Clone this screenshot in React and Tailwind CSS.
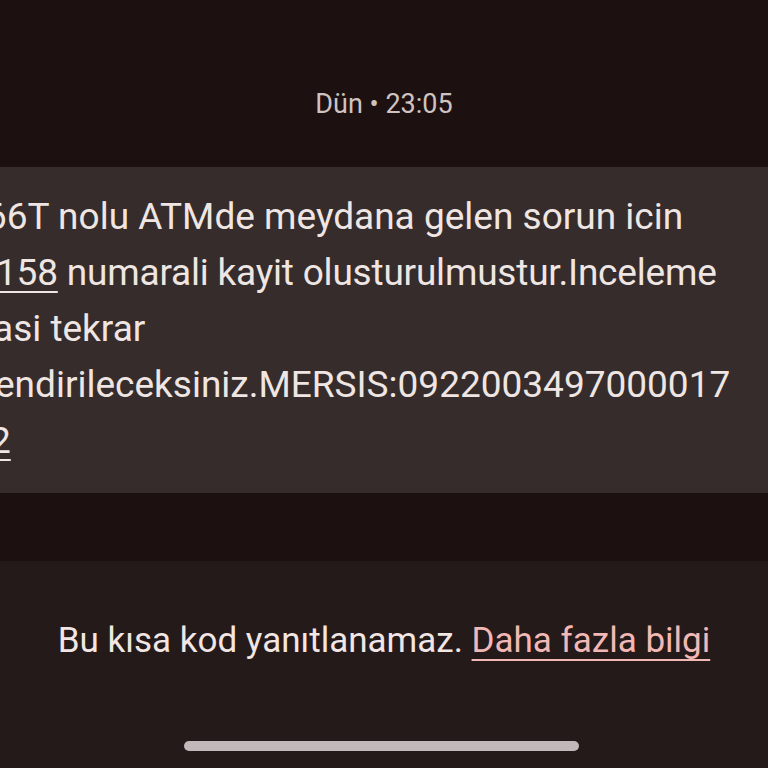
export default function App() {
  const font = "font-['Roboto','Noto_Sans',sans-serif]";
  return (
    <div className={`w-[768px] h-[768px] bg-[#1d1011] flex flex-col overflow-hidden ${font}`}>
      <div className="h-[167px] shrink-0 flex justify-center pt-[89px]">
        <div className="text-[27px] leading-[31px] text-[#cfc3c1]">Dün • 23:05</div>
      </div>
      <div className="h-[326px] shrink-0 bg-[#352c2b] pt-[22px] overflow-hidden text-[37px] leading-[56px] text-[#efe6e4] whitespace-nowrap">
        <div className="-ml-[14px]">66T nolu ATMde meydana gelen sorun icin</div>
        <div className="-ml-[4px] tracking-[-0.2px]">
          <span className="underline decoration-2 underline-offset-[6px]">158</span> numarali kayit olusturulmustur.Inceleme
        </div>
        <div className="-ml-[7px]">asi tekrar</div>
        <div className="-ml-[5px]">endirileceksiniz.MERSIS:0922003497000017</div>
        <div className="-ml-[10px]">
          <span className="underline decoration-2 underline-offset-[6px]">2</span>
        </div>
      </div>
      <div className="h-[68px] shrink-0" />
      <div className="flex-1 bg-[#241a19] flex flex-col pt-[59px]">
        <div className="text-center text-[35px] leading-[41px] text-[#f2e6e4]">
          Bu kısa kod yanıtlanamaz.{" "}
          <span className="text-[#f2b8b5] underline decoration-2 underline-offset-[7px]">Daha fazla bilgi</span>
        </div>
        <div className="mt-[80px] ml-[184px] w-[395px] h-[10px] rounded-full bg-[#c1b9b9]" />
      </div>
    </div>
  );
}
